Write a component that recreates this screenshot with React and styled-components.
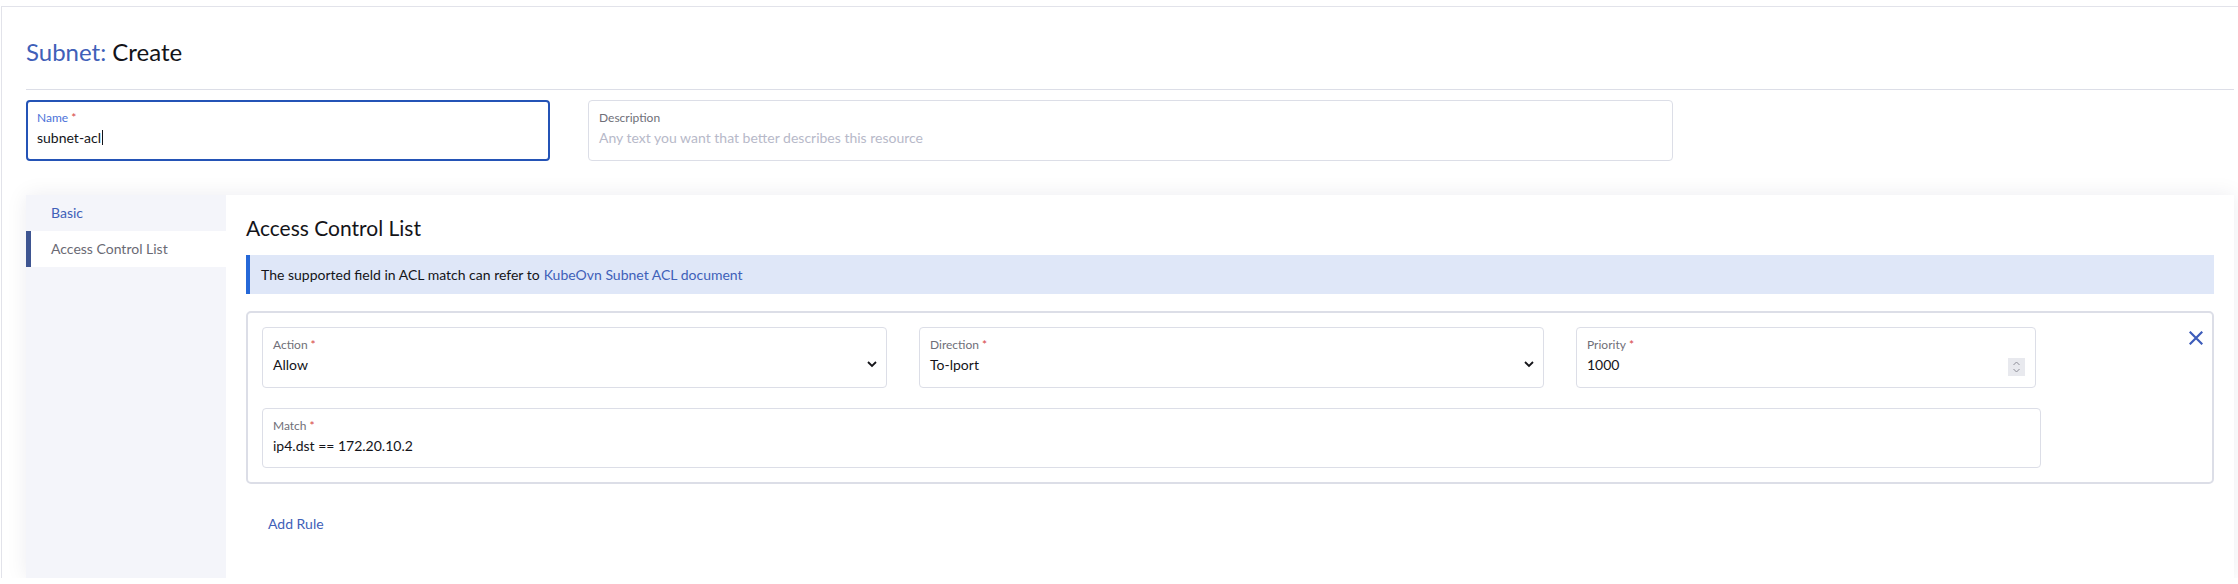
import React from 'react';
import styled, { createGlobalStyle } from 'styled-components';

const GlobalStyle = createGlobalStyle`
    body {
        margin: 0;
        background: #fff;
        font-family: Lato, "Open Sans", sans-serif;
        color: #141419;
    }
`;

const Page = styled.div`
    margin: 6px 0 0 1px;
    border-top: 1px solid #e2e3ea;
    border-left: 1px solid #e2e3ea;
    padding: 31px 4px 0 24px;
`;

const Title = styled.h1`
    margin: 0;
    font-size: 24px;
    font-weight: 400;
    line-height: 1.2;
`;

const TitleLink = styled.span`
    color: #4060b8;
`;

const Divider = styled.hr`
    margin: 22px 0 10px 0;
    border: none;
    border-top: 1px solid #dcdee7;
`;

const HeaderRow = styled.div`
    display: grid;
    grid-template-columns: 524px 1085px;
    column-gap: 38px;
`;

const Field = styled.div`
    box-sizing: border-box;
    height: ${props => props.$height || 61}px;
    border: ${props => props.$focused ? '2px solid #2453b6' : '1px solid #dcdee7'};
    border-radius: 4px;
    padding: ${props => props.$focused ? '8px 9px 0' : '9px 10px 0'};
    display: flex;
    align-items: center;
    background: #fff;
`;

const FieldBody = styled.div`
    flex: 1;
    align-self: flex-start;
    min-width: 0;
`;

const Label = styled.div`
    font-size: 12px;
    line-height: 15px;
    color: ${props => props.$focused ? '#4a72d9' : '#6f6f78'};
`;

const Required = styled.span`
    color: #d64545;
    margin-left: 3px;
`;

const Value = styled.div`
    margin-top: 4px;
    font-size: 14px;
    line-height: 17px;
    color: ${props => props.$placeholder ? '#b7b9c9' : '#141419'};
    display: flex;
    align-items: center;
`;

const Caret = styled.span`
    display: inline-block;
    width: 1px;
    height: 15px;
    margin-left: 1px;
    background: #141419;
`;

const Tabbed = styled.div`
    margin-top: 34px;
    display: flex;
    box-shadow: 0 0 20px rgba(30, 30, 60, 0.08);
`;

const SideTabs = styled.ul`
    list-style: none;
    margin: 0;
    padding: 0;
    width: 200px;
    background: #f4f5fa;
`;

const Tab = styled.li`
    height: 36px;
    display: flex;
    align-items: center;
    box-sizing: border-box;
    padding-left: 20px;
    font-size: 14px;
    border-left: 5px solid ${props => props.$active ? '#3e5591' : 'transparent'};
    background: ${props => props.$active ? '#fff' : 'transparent'};
    color: ${props => props.$active ? '#6a6a74' : '#4060b8'};
`;

const Panel = styled.section`
    flex: 1;
    background: #fff;
    padding: 20px;
`;

const PanelHeading = styled.h3`
    margin: 0;
    font-size: 21px;
    font-weight: 400;
    line-height: 25px;
`;

const Banner = styled.div`
    margin-top: 15px;
    height: 39px;
    display: flex;
    align-items: center;
    box-sizing: border-box;
    padding-left: 11px;
    background: #dfe7f8;
    border-left: 4px solid #2568d8;
    font-size: 14px;
`;

const BannerLink = styled.a`
    color: #4060b8;
    text-decoration: none;
    margin-left: 4px;
`;

const RuleBox = styled.div`
    margin-top: 17px;
    border: 2px solid #dcdee7;
    border-radius: 5px;
    padding: 14px 8px 14px 14px;
    display: flex;
    align-items: flex-start;
`;

const RuleFields = styled.div`
    width: 1779px;
    display: flex;
    flex-direction: column;
    gap: 20px;
`;

const RuleRow = styled.div`
    display: grid;
    grid-template-columns: 625px 625px 460px;
    column-gap: 32px;
`;

const RemoveButton = styled.button`
    margin: 4px 0 0 auto;
    padding: 0;
    border: none;
    background: none;
    width: 16px;
    height: 14px;
    display: flex;
    align-items: center;
    justify-content: center;
    cursor: pointer;
`;

const Spinner = styled.span`
    width: 17px;
    height: 18px;
    margin-top: 10px;
    background: #e8e9ee;
    display: flex;
    align-items: center;
    justify-content: center;
`;

const AddButton = styled.button`
    margin: 20px 0 14px 0;
    height: 40px;
    padding: 0 22px;
    border: none;
    background: none;
    color: #4060b8;
    font-family: Lato, "Open Sans", sans-serif;
    font-size: 14px;
    cursor: pointer;
`;

const Chevron = () => (
    <svg width="12" height="8" viewBox="0 0 12 8" style={{ marginTop: 4, marginRight: -2 }}>
        <path d="M2 2 L6 6 L10 2" fill="none" stroke="#141419" strokeWidth="1.8" />
    </svg>
);

const SelectField = ({ label, value }) => (
    <Field>
        <FieldBody>
            <Label>{label}<Required>*</Required></Label>
            <Value>{value}</Value>
        </FieldBody>
        <Chevron />
    </Field>
);

const App = () => (
    <React.Fragment>
        <GlobalStyle />
        <Page>
            <Title><TitleLink>Subnet:</TitleLink> Create</Title>
            <Divider />
            <HeaderRow>
                <Field $focused>
                    <FieldBody>
                        <Label $focused>Name<Required>*</Required></Label>
                        <Value>subnet-acl<Caret /></Value>
                    </FieldBody>
                </Field>
                <Field>
                    <FieldBody>
                        <Label>Description</Label>
                        <Value $placeholder>Any text you want that better describes this resource</Value>
                    </FieldBody>
                </Field>
            </HeaderRow>
            <Tabbed>
                <SideTabs>
                    <Tab>Basic</Tab>
                    <Tab $active>Access Control List</Tab>
                </SideTabs>
                <Panel>
                    <PanelHeading>Access Control List</PanelHeading>
                    <Banner>
                        The supported field in ACL match can refer to
                        <BannerLink href="#">KubeOvn Subnet ACL document</BannerLink>
                    </Banner>
                    <RuleBox>
                        <RuleFields>
                            <RuleRow>
                                <SelectField label="Action" value="Allow" />
                                <SelectField label="Direction" value="To-lport" />
                                <Field>
                                    <FieldBody>
                                        <Label>Priority<Required>*</Required></Label>
                                        <Value>1000</Value>
                                    </FieldBody>
                                    <Spinner>
                                        <svg width="9" height="14" viewBox="0 0 9 14">
                                            <path d="M1.5 5 L4.5 2 L7.5 5 M1.5 9 L4.5 12 L7.5 9" fill="none" stroke="#8e8e98" strokeWidth="1" />
                                        </svg>
                                    </Spinner>
                                </Field>
                            </RuleRow>
                            <Field $height={60}>
                                <FieldBody>
                                    <Label>Match<Required>*</Required></Label>
                                    <Value>ip4.dst == 172.20.10.2</Value>
                                </FieldBody>
                            </Field>
                        </RuleFields>
                        <RemoveButton aria-label="Remove">
                            <svg width="14" height="14" viewBox="0 0 14 14">
                                <path d="M1.5 1.5 L12.5 12.5 M12.5 1.5 L1.5 12.5" stroke="#3d5cba" strokeWidth="2.2" strokeLinecap="square" />
                            </svg>
                        </RemoveButton>
                    </RuleBox>
                    <AddButton>Add Rule</AddButton>
                </Panel>
            </Tabbed>
        </Page>
    </React.Fragment>
);

export default App;
